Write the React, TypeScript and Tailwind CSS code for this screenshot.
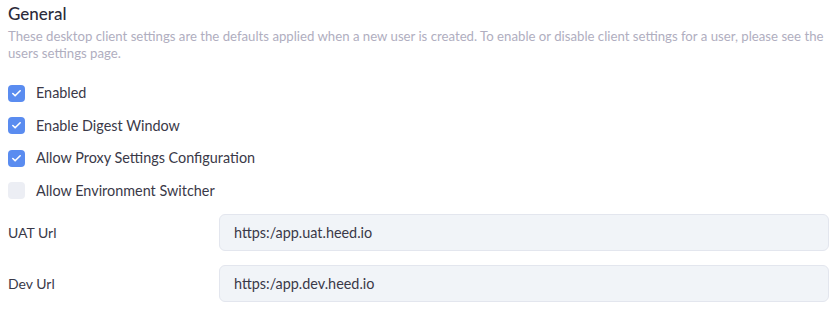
import { Check } from 'lucide-react';

const options = [
  { label: 'Enabled', checked: true },
  { label: 'Enable Digest Window', checked: true },
  { label: 'Allow Proxy Settings Configuration', checked: true },
  { label: 'Allow Environment Switcher', checked: false },
];

const urls = [
  { label: 'UAT Url', value: 'https:/app.uat.heed.io' },
  { label: 'Dev Url', value: 'https:/app.dev.heed.io' },
];

export default function App() {
  return (
    <div className="w-[838px] h-[313px] bg-white px-2 pt-[2px] font-['Lato',sans-serif] text-[#33323f]">
      <h2 className="text-[17px] leading-[24px] font-medium text-[#2c2b3a]">General</h2>
      <p className="mt-[2px] w-[822px] text-[13.2px] leading-[17px] text-[#b0aec0]">
        These desktop client settings are the defaults applied when a new user is created. To enable or disable client settings for a user, please see the users settings page.
      </p>

      <div className="mt-[22.5px] flex flex-col gap-[15.5px]">
        {options.map((o) => (
          <label key={o.label} className="flex items-center gap-[11px] h-[17px]">
            <span
              className={
                o.checked
                  ? 'flex items-center justify-center w-[17px] h-[17px] rounded-[4px] bg-[#5a8cf0]'
                  : 'flex items-center justify-center w-[17px] h-[17px] rounded-[4px] bg-[#eceef4]'
              }
            >
              {o.checked && <Check className="w-[11px] h-[11px] text-white" strokeWidth={3.5} />}
            </span>
            <span className="text-[14.4px] text-[#3a3948]">{o.label}</span>
          </label>
        ))}
      </div>

      <div className="mt-[14.5px] flex flex-col gap-[14px] pr-[1px]">
        {urls.map((u) => (
          <div key={u.label} className="flex items-center">
            <span className="w-[211px] text-[14px] text-[#3a3948]">{u.label}</span>
            <input
              readOnly
              value={u.value}
              className="flex-1 h-[37px] rounded-[6px] border border-[#e3e6ee] bg-[#f1f4f8] px-[14px] text-[14.4px] text-[#3a3948] outline-none"
            />
          </div>
        ))}
      </div>
    </div>
  );
}
